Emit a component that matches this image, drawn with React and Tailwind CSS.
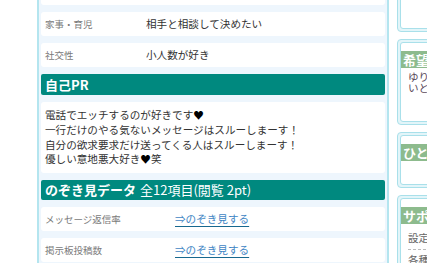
import React from 'react';

const jp = { fontFamily: '"Noto Sans CJK JP", "Noto Sans", sans-serif' };

const Row = ({ label, children, valueX = 'w-[101px]' }) => (
  <div className="h-[24px] shrink-0 bg-white rounded-[3px] flex items-center pl-[4px]">
    <span className={`${valueX} shrink-0 text-[9.5px] text-[#7a7a7a]`}>{label}</span>
    <span className="text-[10.6px] text-[#333]">{children}</span>
  </div>
);

const Heading = ({ children, h = 'h-[21px]' }) => (
  <div className={`${h} shrink-0 bg-[#00897f] rounded-[2px] flex items-center pl-[4px] text-white font-bold text-[13px]`}>
    {children}
  </div>
);

const Peek = ({ label }) => (
  <div className="h-[24px] shrink-0 bg-white rounded-[3px] flex items-center pl-[4px]">
    <span className="w-[130px] shrink-0 text-[9.5px] text-[#7a7a7a]">{label}</span>
    <span className="text-[10.6px] text-[#3f86c4] underline decoration-[#17688f] underline-offset-[3px]">⇒のぞき見する</span>
  </div>
);

const SideBox = ({ title, children, className = '' }) => (
  <div className={`shrink-0 border border-[#a9e0ea] rounded-[4px] bg-[#e3f5f9] p-[2px] ${className}`}>
    <div className="border border-[#a9e0ea] rounded-[3px] bg-white h-full flex flex-col">
      {title && (
        <div className="mt-[8px] h-[17px] bg-[#8dbb8d] flex items-center pl-[2px] text-white font-bold text-[13px]">
          {title}
        </div>
      )}
      {children}
    </div>
  </div>
);

export default function App() {
  return (
    <div className="w-[427px] h-[263px] overflow-hidden bg-white flex" style={jp}>
      <div className="w-[37px] shrink-0" />
      <div className="w-[352px] shrink-0 border-x-2 border-[#b4e5ef] bg-[#eef6fd] px-[2px] flex flex-col gap-[7px]">
        <div className="h-[5px] shrink-0 bg-white rounded-b-[3px]" />
        <Row label="家事・育児">相手と相談して決めたい</Row>
        <Row label="社交性">小人数が好き</Row>
        <Heading>自己PR</Heading>
        <div className="shrink-0 bg-white rounded-[3px] pl-[4px] py-[6px] text-[10.6px] leading-[14.8px] text-[#333]">
          <p>電話でエッチするのが好きです<span className="text-black">♥</span></p>
          <p>一行だけのやる気ないメッセージはスルーしまーす！</p>
          <p>自分の欲求要求だけ送ってくる人はスルーしまーす！</p>
          <p>優しい意地悪大好き<span className="text-black">♥</span>笑</p>
        </div>
        <Heading h="h-[20px]">
          のぞき見データ <span className="font-normal ml-[4px]">全12項目(閲覧 2pt)</span>
        </Heading>
        <Peek label="メッセージ返信率" />
        <Peek label="掲示板投稿数" />
      </div>
      <div className="w-[8px] shrink-0" />
      <div className="w-[200px] shrink-0 flex flex-col gap-[7px] -mt-[40px]">
        <SideBox className="h-[72px]" />
        <SideBox title="希望" className="h-[86px]">
          <div className="pl-[7px] pt-[3px] text-[10.6px] leading-[11px] text-[#5a4a5a]">
            <p>ゆりかもめ沿線</p>
            <p>いとこ</p>
          </div>
        </SideBox>
        <SideBox title="ひとこと" className="h-[56px]" />
        <SideBox title="サポート" className="h-[80px]">
          <div className="px-[7px] text-[10.6px] text-[#666]">
            <p className="pt-[6px] pb-[3px] border-b border-dashed border-[#bbb]">設定</p>
            <p className="pt-[2px]">各種</p>
          </div>
        </SideBox>
      </div>
    </div>
  );
}
